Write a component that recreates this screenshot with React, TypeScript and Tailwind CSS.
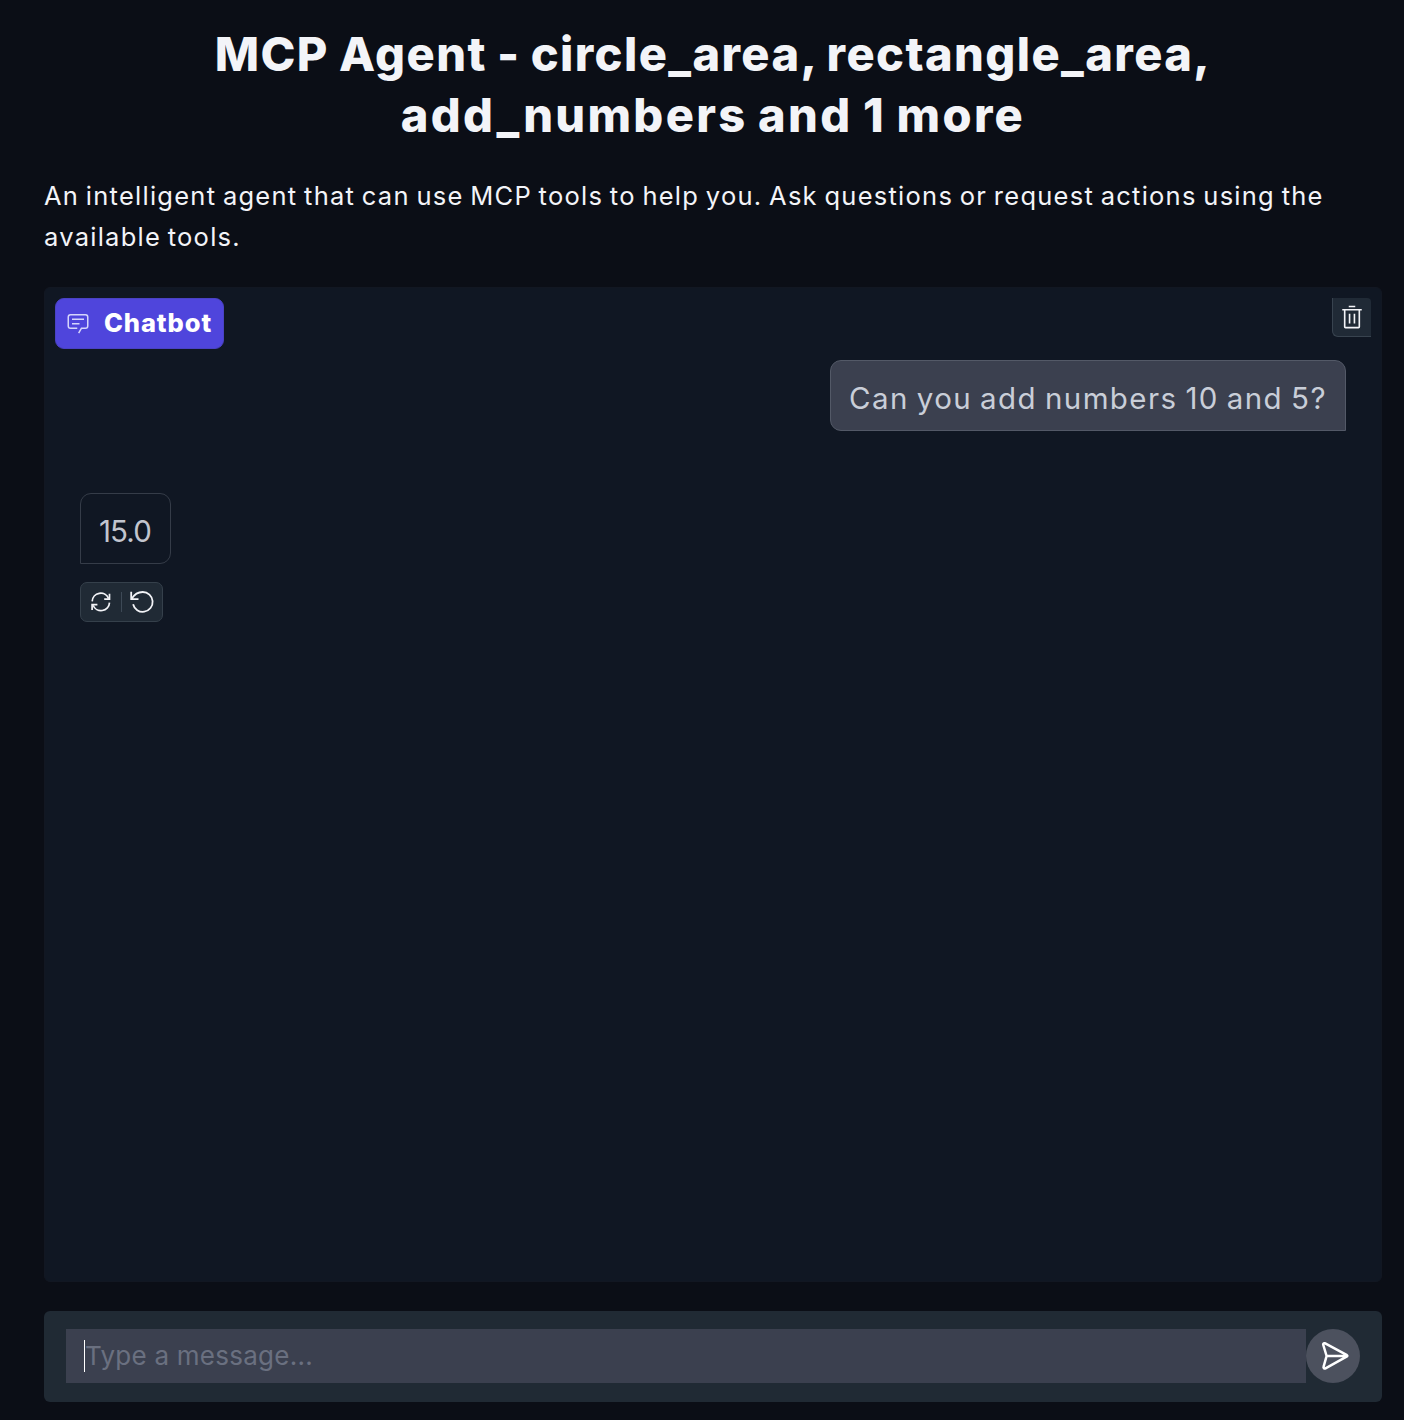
import React from "react";

function ChatIcon() {
  return (
    <svg viewBox="0 0 32 32" className="size-[24px]" fill="currentColor">
      <path d="M17.74 30 16 29l4-7h6a2 2 0 0 0 2-2V8a2 2 0 0 0-2-2H6a2 2 0 0 0-2 2v12a2 2 0 0 0 2 2h9v2H6a4 4 0 0 1-4-4V8a4 4 0 0 1 4-4h20a4 4 0 0 1 4 4v12a4 4 0 0 1-4 4h-4.84Z" />
      <path d="M8 10h16v2H8zm0 6h10v2H8z" />
    </svg>
  );
}

function TrashIcon() {
  return (
    <svg viewBox="0 0 32 32" className="size-[26px]" fill="currentColor">
      <path d="M12 12h2v12h-2zM18 12h2v12h-2zM4 6v2h2v20a2 2 0 0 0 2 2h16a2 2 0 0 0 2-2V8h2V6zm4 22V8h16v20zM12 2h8v2h-8z" />
    </svg>
  );
}

function RetryIcon() {
  return (
    <svg viewBox="0 0 24 24" className="size-[24px]" fill="none" stroke="currentColor" strokeWidth="1.7" strokeLinejoin="miter">
      <path d="M19.6 8.6A8.5 8.5 0 0 0 3.2 11.4M4.1 15.2a8.5 8.5 0 0 0 16.4-2.6" />
      <path d="M20.5 3.8V9.1H15.2M3.1 20V14.7H8.4" />
    </svg>
  );
}

function UndoIcon() {
  return (
    <svg viewBox="0 0 24 24" className="size-[24px]" fill="none" stroke="currentColor" strokeWidth="1.8">
      <path d="M1.2 1.8v7.3h7.3M1.6 8.9C4.2 4.6 8.3 2 12.7 2a9.9 9.9 0 1 1-9.6 12.2" />
    </svg>
  );
}

function SendIcon() {
  return (
    <svg viewBox="0 0 28 28" className="size-[28px]" fill="none" stroke="currentColor" strokeWidth="2.5" strokeLinecap="round" strokeLinejoin="round">
      <path d="M4.2 1.4 26 13.2a.7.7 0 0 1 0 1.2L4.5 26.3c-1.1.6-2.3-.3-1.9-1.6L5.6 14 2.3 3c-.4-1.3.8-2.2 1.9-1.6ZM5.6 14H26" />
    </svg>
  );
}

export default function App() {
  return (
    <main className="flex h-[1420px] w-[1404px] flex-col bg-[#0b0e16] pr-[22px] pl-[44px] pt-[23px] font-['Inter',sans-serif] text-[#f3f4f8]">
      <h1 className="h-[122px] text-center text-[47px] leading-[61px] font-extrabold whitespace-nowrap">
        <span className="tracking-[1.4px] [word-spacing:-1.5px]">MCP Agent - circle_area, rectangle_area,</span>
        <br />
        <span className="tracking-[2.3px] [word-spacing:-2px]">add_numbers and 1 more</span>
      </h1>
      <p className="mt-[30px] h-[82px] text-[25.5px] leading-[41px] tracking-[1.25px] whitespace-nowrap [word-spacing:-1.75px]">
        <span>An intelligent agent that can use MCP tools to help you. Ask questions or request actions using the</span>
        <br />
        <span>available tools.</span>
      </p>

      <section className="mt-[30px] flex h-[995px] shrink-0 flex-col rounded-[6px] border border-[#121722] bg-[#101723]">
        <header className="flex h-[72px] items-start justify-between pt-[10px] pr-[10px] pl-[10px]">
          <div className="flex h-[51px] w-[169px] items-center rounded-[9px] border border-[#4a42c4] bg-[#4f45dc] pl-[10px]">
            <span className="-mt-[2px] text-[#d5d5fb]"><ChatIcon /></span>
            <span className="ml-[14px] text-[25.5px] font-extrabold tracking-[0.9px] whitespace-nowrap text-white">Chatbot</span>
          </div>
          <button aria-label="Clear" className="flex h-[39px] w-[39px] items-center justify-center rounded-tr-[4px] rounded-bl-[6px] border-b border-l border-[#38434f] bg-[#202a36]">
            <TrashIcon />
          </button>
        </header>

        <div className="flex flex-col pr-[35px] pl-[35px]">
          <div className="flex h-[71px] w-[516px] items-center self-end rounded-[11px] rounded-br-none border border-[#535967] bg-[#3b404f] pt-[6px] pl-[18px] text-[29.5px] tracking-[1.4px] [word-spacing:-1.7px] whitespace-nowrap text-[#c9ced8]">
            Can you add numbers 10 and 5?
          </div>
          <div className="mt-[62px] flex h-[71px] w-[91px] items-center rounded-[11px] rounded-bl-none border border-[#353c48] pt-[6px] pl-[18px] text-[29.5px] tracking-[-0.9px] whitespace-nowrap text-[#c2c5ce]">
            15.0
          </div>
          <div className="mt-[18px] flex h-[40px] w-[83px] items-center rounded-[7px] border border-[#35404b] bg-[#202a35] pl-[8px]">
            <RetryIcon />
            <span className="mx-[8px] h-[20px] w-px bg-[#3d4956]" />
            <UndoIcon />
          </div>
        </div>
      </section>

      <form className="mt-[29px] flex h-[91px] shrink-0 items-start rounded-[6px] bg-[#202a34] pt-[18px] pl-[22px]">
        <div className="flex h-[54px] w-[1240px] items-center bg-[#3b404f] pl-[18px]">
          <span className="h-[32px] w-px bg-white" />
          <span className="pb-[2px] text-[26px] tracking-[0.25px] whitespace-nowrap text-[#6a7080]">Type a message...</span>
        </div>
        <button type="button" aria-label="Send" className="flex size-[54px] items-center justify-center rounded-full bg-[#4c515e] pb-px pl-[4px] text-white">
          <SendIcon />
        </button>
      </form>
    </main>
  );
}
